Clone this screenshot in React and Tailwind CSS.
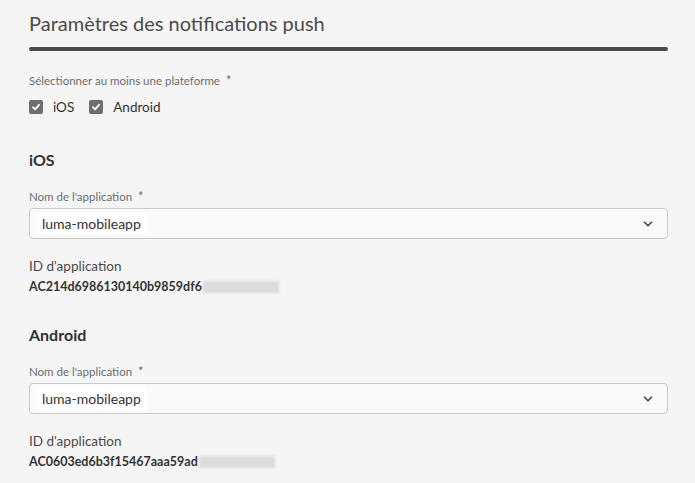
import React from "react";
import { ChevronDown } from "lucide-react";

function Check({ label }) {
  return (
    <label className="flex items-center gap-[10px]">
      <span className="w-[14px] h-[14px] rounded-[2px] bg-[#6e6e6e] flex items-center justify-center">
        <svg width="10" height="10" viewBox="0 0 10 10" fill="none">
          <path d="M2 5.2 L4.1 7.3 L8 2.8" stroke="#fff" strokeWidth="1.8" strokeLinecap="round" strokeLinejoin="round" />
        </svg>
      </span>
      <span className="text-[13.5px] text-[#323232]">{label}</span>
    </label>
  );
}

function Platform({ name, appId }) {
  return (
    <section>
      <h2 className="text-[16px] font-bold text-[#323232] leading-5">{name}</h2>
      <div className="mt-[18px] text-[11.5px] text-[#6e6e6e] leading-4">
        Nom de l'application <span className="ml-[3px] text-[13px]">*</span>
      </div>
      <div className="mt-[3px] h-[31px] rounded-[4px] border border-[#cacaca] bg-[#fafafa] flex items-center pl-[6px] pr-[12px]">
        <span className="bg-white px-[6px] h-[22px] flex items-center text-[14px] text-[#323232]">luma-mobileapp</span>
        <ChevronDown className="ml-auto size-[14px] text-[#4b4b4b]" strokeWidth={3} />
      </div>
      <div className="mt-[17px] text-[13.5px] text-[#4b4b4b] leading-5">ID d'application</div>
      <div className="mt-[1px] flex items-center text-[12.5px] font-bold text-[#323232] leading-5">
        {appId}
        <span className="ml-[1px] h-[12px] w-[76px] bg-[#dcdcdc] blur-[1px]" />
      </div>
    </section>
  );
}

export default function App() {
  return (
    <div className="w-[695px] h-[483px] bg-[#f5f5f5] overflow-hidden" style={{ fontFamily: "Lato, 'Noto Sans', sans-serif" }}>
      <div className="pl-[29px] pr-[27px] pt-[11px]">
        <h1 className="text-[20px] text-[#4b4b4b] leading-6">Paramètres des notifications push</h1>
        <div className="mt-[12px] h-[4px] rounded-full bg-[#4b4b4b]" />
        <div className="mt-[21px] text-[11.5px] text-[#6e6e6e] leading-4">
          Sélectionner au moins une plateforme <span className="ml-[3px] text-[13px]">*</span>
        </div>
        <div className="mt-[8px] flex gap-[15px]">
          <Check label="iOS" />
          <Check label="Android" />
        </div>
        <div className="mt-[33px] flex flex-col gap-[28px]">
          <Platform name="iOS" appId="AC214d6986130140b9859df6" />
          <Platform name="Android" appId="AC0603ed6b3f15467aaa59ad" />
        </div>
      </div>
    </div>
  );
}
